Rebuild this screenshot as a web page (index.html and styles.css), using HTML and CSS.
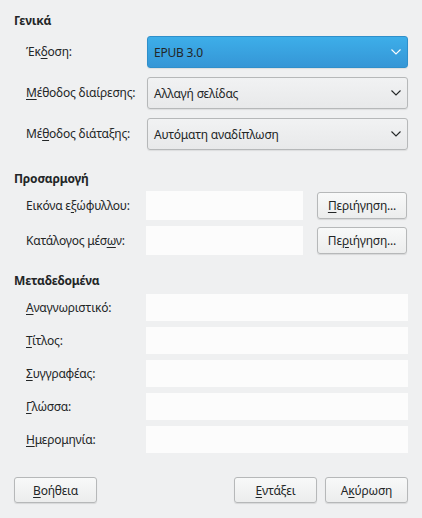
FILE: index.html
```html
<!DOCTYPE html>
<html lang="el">
<head>
<meta charset="utf-8">
<link rel="stylesheet" href="styles.css">
</head>
<body>
<div class="dialog">
  <section class="group general">
    <h2 class="heading">Γενικά</h2>
    <div class="form combos">
      <label class="lbl">Έκ<u>δ</u>οση:</label>
      <div class="combo active"><span>EPUB 3.0</span>
        <svg class="chev" viewBox="0 0 10 6" width="10" height="6"><path d="M0.5 0.5 L5 5 L9.5 0.5" fill="none" stroke="#fcfcfc" stroke-width="1.1"/></svg>
      </div>
      <label class="lbl"><u>Μ</u>έθοδος διαίρεσης:</label>
      <div class="combo"><span>Αλλαγή σελίδας</span>
        <svg class="chev" viewBox="0 0 10 6" width="10" height="6"><path d="M0.5 0.5 L5 5 L9.5 0.5" fill="none" stroke="#232627" stroke-width="1.1"/></svg>
      </div>
      <label class="lbl">Μέ<u>θ</u>οδος διάταξης:</label>
      <div class="combo"><span>Αυτόματη αναδίπλωση</span>
        <svg class="chev" viewBox="0 0 10 6" width="10" height="6"><path d="M0.5 0.5 L5 5 L9.5 0.5" fill="none" stroke="#232627" stroke-width="1.1"/></svg>
      </div>
    </div>
  </section>

  <section class="group custom">
    <h2 class="heading">Προσαρμογή</h2>
    <div class="form browse">
      <label class="lbl">Εικόνα ε<u>ξ</u>ώφυλλου:</label>
      <div class="pathrow">
        <div class="field"></div>
        <button class="btn browse-btn"><u>Π</u>εριήγηση...</button>
      </div>
      <label class="lbl">Κατάλογος μέσ<u>ω</u>ν:</label>
      <div class="pathrow">
        <div class="field"></div>
        <button class="btn browse-btn">Πε<u>ρ</u>ιήγηση...</button>
      </div>
    </div>
  </section>

  <section class="group metadata">
    <h2 class="heading">Μεταδεδομένα</h2>
    <div class="form meta">
      <label class="lbl"><u>Α</u>ναγνωριστικό:</label>
      <div class="field"></div>
      <label class="lbl"><u>Τ</u>ίτλος:</label>
      <div class="field"></div>
      <label class="lbl"><u>Σ</u>υγγραφέας:</label>
      <div class="field"></div>
      <label class="lbl"><u>Γ</u>λώσσα:</label>
      <div class="field"></div>
      <label class="lbl"><u>Η</u>μερομηνία:</label>
      <div class="field"></div>
    </div>
  </section>

  <div class="buttons">
    <button class="btn dlg-btn"><u>Β</u>οήθεια</button>
    <div class="spacer"></div>
    <button class="btn dlg-btn"><u>Ε</u>ντάξει</button>
    <button class="btn dlg-btn">Α<u>κ</u>ύρωση</button>
  </div>
</div>
</body>
</html>
```

FILE: styles.css
```css
* { box-sizing: border-box; }

html, body {
  margin: 0;
  padding: 0;
  background: #eff0f1;
}

body {
  font-family: "Noto Sans", "DejaVu Sans", sans-serif;
  font-size: 12px;
  letter-spacing: -0.2px;
  color: #232627;
  width: 422px;
  height: 518px;
  overflow: hidden;
}

.dialog {
  padding: 12px 14px 15px 14px;
  display: flex;
  flex-direction: column;
  height: 518px;
}

.heading {
  margin: 0;
  font-size: 12px;
  font-weight: bold;
  line-height: 18px;
  height: 18px;
}

.form {
  display: grid;
  grid-template-columns: 120px 1fr;
  align-items: center;
  padding-left: 12px;
}

.lbl {
  white-space: nowrap;
  line-height: 18px;
}

u {
  text-decoration: underline;
  text-underline-offset: 2px;
  text-decoration-thickness: 1px;
}

/* Combos */
.combos {
  margin-top: 6px;
  row-gap: 9px;
}

.combo {
  height: 32px;
  margin-left: 1px;
  border: 1px solid #b6b8b9;
  border-radius: 3px;
  background: linear-gradient(#f1f2f3, #e8e9ea);
  box-shadow: 0 1px 1px rgba(0,0,0,0.08);
  display: flex;
  align-items: center;
  justify-content: space-between;
  padding: 0 6px 0 6px;
}

.combo.active {
  background: linear-gradient(#3daee9, #3596d6);
  border-color: #2f8fca;
}

.chev {
  margin-right: 0;
}

/* Browse */
.custom {
  margin-top: 20px;
}

.browse {
  margin-top: 3px;
  row-gap: 6px;
}

.pathrow {
  display: flex;
  align-items: center;
  gap: 14px;
}

.field {
  background: #fcfcfc;
  height: 29px;
}

.pathrow .field {
  flex: 1;
}

.btn {
  font-family: inherit;
  font-size: 12px;
  letter-spacing: -0.2px;
  color: #232627;
  border: 1px solid #b6b8b9;
  border-radius: 3px;
  background: linear-gradient(#f8f9f9, #eceded);
  box-shadow: 0 1px 1px rgba(0,0,0,0.1);
  padding: 0;
  margin: 0;
}

.browse-btn {
  width: 90px;
  height: 27px;
  margin-right: 1px;
}

/* Meta */
.metadata {
  margin-top: 17px;
}

.meta {
  margin-top: 4px;
  row-gap: 6px;
}

.meta .field {
  height: 27px;
}

/* Buttons */
.buttons {
  margin-top: auto;
  display: flex;
  gap: 8px;
}

.spacer { flex: 1; }

.dlg-btn {
  width: 83px;
  height: 26px;
}
```
